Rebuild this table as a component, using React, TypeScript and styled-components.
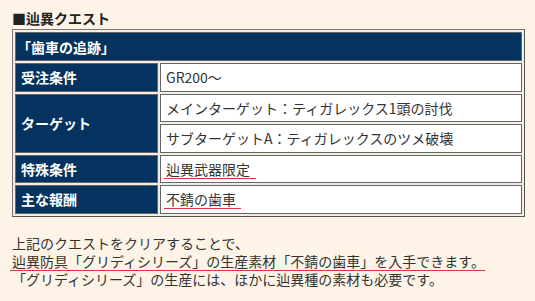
import React from 'react';
import styled, { createGlobalStyle } from 'styled-components';

const GlobalStyle = createGlobalStyle`
  html, body {
    margin: 0;
    padding: 0;
    background: #fdf3e6;
  }
  body {
    font-family: "Noto Sans CJK JP", "Noto Sans", sans-serif;
    color: #333;
  }
`;

const Page = styled.div`
  padding: 8px 11px 0 12px;
  width: 535px;
  box-sizing: border-box;
`;

const Heading = styled.h3`
  margin: 0;
  font-size: 14px;
  line-height: 21px;
  font-weight: bold;
  color: #222;
`;

const QuestTable = styled.table`
  width: 513px;
  border: 1px solid #7a7a7a;
  border-right-color: #555;
  border-bottom-color: #555;
  border-spacing: 2px;
  font-size: 14px;
  line-height: 18px;
  background: #f4ede4;
`;

const HeadCell = styled.th`
  background: #05335f;
  color: #fff;
  text-align: left;
  font-weight: bold;
  height: 27px;
  padding: 0 5px 0 1px;
  border: 1px solid #666;
`;

const LabelCell = styled.th`
  width: 131px;
  background: #05335f;
  color: #fff;
  text-align: left;
  font-weight: bold;
  height: 26.5px;
  padding: 0 5px;
  border: 1px solid #666;
`;

const ValueCell = styled.td`
  background: #fff;
  color: #333;
  height: 26.5px;
  padding: 0 5px;
  border: 1px solid #666;
`;

const Marked = styled.span<{ $trail?: number }>`
  background: linear-gradient(#d63a3e, #d63a3e) no-repeat left bottom / 100% 1px;
  margin-left: -2px;
  padding-left: 2px;
  padding-right: ${(p) => p.$trail ?? 0}px;
`;

const Note = styled.p`
  margin: 17px 0 0;
  font-size: 14px;
  line-height: 18px;
  color: #333;
`;

const App: React.FC = () => {
  return (
    <Page>
      <GlobalStyle />
      <Heading>■辿異クエスト</Heading>
      <QuestTable>
        <tbody>
          <tr>
            <HeadCell colSpan={2}>「歯車の追跡」</HeadCell>
          </tr>
          <tr>
            <LabelCell>受注条件</LabelCell>
            <ValueCell>GR200～</ValueCell>
          </tr>
          <tr>
            <LabelCell rowSpan={2}>ターゲット</LabelCell>
            <ValueCell>メインターゲット：ティガレックス1頭の討伐</ValueCell>
          </tr>
          <tr>
            <ValueCell>サブターゲットA：ティガレックスのツメ破壊</ValueCell>
          </tr>
          <tr>
            <LabelCell>特殊条件</LabelCell>
            <ValueCell>
              <Marked $trail={6}>辿異武器限定</Marked>
            </ValueCell>
          </tr>
          <tr>
            <LabelCell>主な報酬</LabelCell>
            <ValueCell>
              <Marked $trail={5}>不錆の歯車</Marked>
            </ValueCell>
          </tr>
        </tbody>
      </QuestTable>
      <Note>
        上記のクエストをクリアすることで、
        <br />
        <Marked>辿異防具「グリディシリーズ」の生産素材「不錆の歯車」を入手できます。</Marked>
        <br />
        「グリディシリーズ」の生産には、ほかに辿異種の素材も必要です。
      </Note>
    </Page>
  );
};

export default App;
